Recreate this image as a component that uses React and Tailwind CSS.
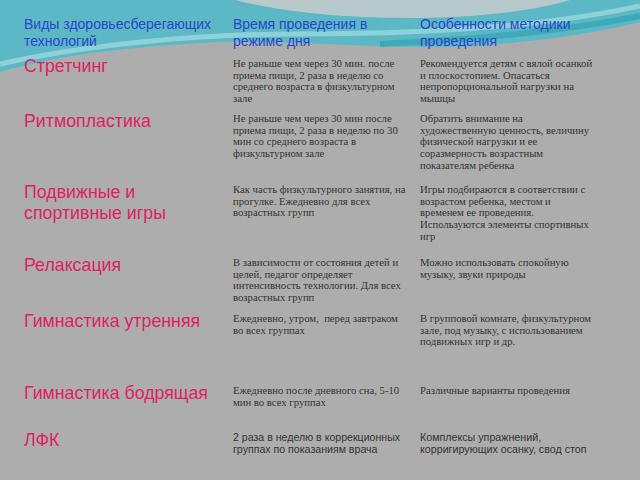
import React from "react";

const rows = [
  {
    label: ["Стретчинг"],
    h: "h-[55px]",
    mid: [
      "Не раньше чем через 30 мин. после",
      "приема пищи, 2 раза в неделю со",
      "среднего возраста в физкультурном",
      "зале",
    ],
    right: [
      "Рекомендуется детям с вялой осанкой",
      "и плоскостопием. Опасаться",
      "непропорциональной нагрузки на",
      "мышцы",
    ],
  },
  {
    label: ["Ритмопластика"],
    h: "h-[71px]",
    mid: [
      "Не раньше чем через 30 мин после",
      "приема пищи, 2 раза в неделю по 30",
      "мин со среднего возраста в",
      "физкультурном зале",
    ],
    right: [
      "Обратить внимание на",
      "художественную ценность, величину",
      "физической нагрузки и ее",
      "соразмерность возрастным",
      "показателям ребенка",
    ],
  },
  {
    label: ["Подвижные и", "спортивные игры"],
    h: "h-[73px]",
    mid: [
      "Как часть физкультурного занятия, на",
      "прогулке. Ежедневно для всех",
      "возрастных групп",
    ],
    right: [
      "Игры подбираются в соответствии с",
      "возрастом ребенка, местом и",
      "временем ее проведения.",
      "Используются элементы спортивных",
      "игр",
    ],
  },
  {
    label: ["Релаксация"],
    h: "h-[56px]",
    mid: [
      "В зависимости от состояния детей и",
      "целей, педагог определяет",
      "интенсивность технологии. Для всех",
      "возрастных групп",
    ],
    right: ["Можно использовать спокойную", "музыку, звуки природы"],
  },
  {
    label: ["Гимнастика утренняя"],
    h: "h-[72px]",
    mid: ["Ежедневно, утром,  перед завтраком", "во всех группах"],
    right: [
      "В групповой комнате, физкультурном",
      "зале, под музыку, с использованием",
      "подвижных игр и др.",
    ],
  },
  {
    label: ["Гимнастика бодрящая"],
    h: "h-[47px]",
    mid: ["Ежедневно после дневного сна, 5-10", "мин во всех группах"],
    right: ["Различные варианты проведения"],
  },
  {
    label: ["ЛФК"],
    h: "h-[50px]",
    sans: true,
    mid: ["2 раза в неделю в коррекционных", "группах по показаниям врача"],
    right: ["Комплексы упражнений,", "корригирующих осанку, свод стоп"],
  },
];

function Wave() {
  return (
    <svg
      className="absolute top-0 left-0 w-[640px] h-[100px]"
      viewBox="0 0 640 100"
    >
      <path
        d="M0 0 H640 V22 C600 32 540 42 470 46 C380 50 300 40 220 42 C140 46 60 54 0 72 Z"
        fill="#5cb8c5"
      />
      <path
        d="M235 0 H570 C530 12 470 18 410 18 C330 18 275 10 235 0 Z"
        fill="#b8c9cb"
      />
      <path
        d="M0 64 C90 44 200 34 300 34 C420 34 540 28 640 6"
        stroke="#8fd1d9"
        strokeWidth="5"
        fill="none"
      />
      <path
        d="M380 44 C470 40 560 32 640 16"
        stroke="#3ea9b8"
        strokeWidth="6"
        fill="none"
      />
    </svg>
  );
}

const cols = "grid grid-cols-[209px_187px_1fr]";

export default function App() {
  return (
    <div className="relative w-[640px] h-[480px] overflow-hidden bg-[#adadad]">
      <Wave />
      <div className="relative pl-6 pt-[16px]">
        <div className={`${cols} h-[40px] text-[14px] leading-[17px] text-[#2b44cc] font-['Liberation_Sans',Arial,sans-serif]`}>
          <div className="whitespace-nowrap">
            Виды здоровьесберегающих
            <br />
            технологий
          </div>
          <div className="whitespace-nowrap">
            Время проведения в
            <br />
            режиме дня
          </div>
          <div className="whitespace-nowrap">
            Особенности методики
            <br />
            проведения
          </div>
        </div>
        {rows.map((r, i) => (
          <div key={i} className={`${cols} ${r.h}`}>
            <div className="text-[17.8px] leading-[21px] text-[#e01e63] font-['Liberation_Sans',Arial,sans-serif]">
              {r.label.map((l, j) => (
                <div key={j} className="whitespace-nowrap">
                  {l}
                </div>
              ))}
            </div>
            <div
              className={
                r.sans
                  ? "pt-[2px] text-[10.6px] leading-[11.5px] text-[#333333] font-['Liberation_Sans',Arial,sans-serif]"
                  : "pt-[2px] text-[10.7px] leading-[11.5px] text-[#333333] font-['Liberation_Serif','Times_New_Roman',serif]"
              }
            >
              {r.mid.map((l, j) => (
                <div key={j} className="whitespace-pre">
                  {l}
                </div>
              ))}
            </div>
            <div
              className={
                r.sans
                  ? "pt-[2px] text-[10.7px] leading-[11.7px] text-[#333333] font-['Liberation_Sans',Arial,sans-serif]"
                  : "pt-[2px] text-[10.7px] leading-[11.7px] text-[#333333] font-['Liberation_Serif','Times_New_Roman',serif]"
              }
            >
              {r.right.map((l, j) => (
                <div key={j} className="whitespace-pre">
                  {l}
                </div>
              ))}
            </div>
          </div>
        ))}
      </div>
    </div>
  );
}
